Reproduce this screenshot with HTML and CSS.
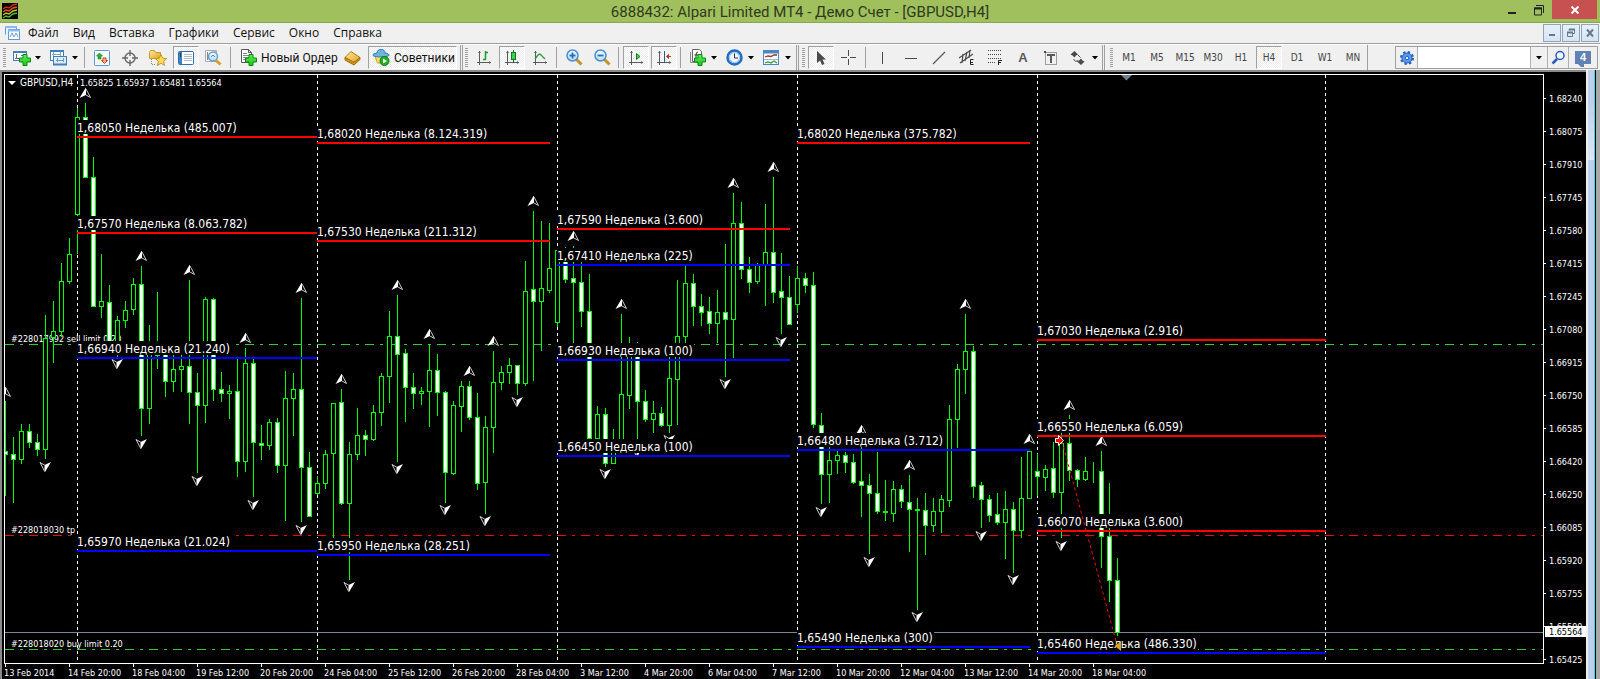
FILE: index.html
```html
<!DOCTYPE html>
<html lang="ru">
<head>
<meta charset="utf-8">
<title>6888432: Alpari Limited MT4 - Демо Счет - [GBPUSD,H4]</title>
<link rel="stylesheet" href="styles.css">
</head>
<body>
<svg class="defs" width="0" height="0" aria-hidden="true">
  <defs>
    <linearGradient id="plusFill" x1="0" y1="0" x2="0" y2="1"><stop offset="0" stop-color="#5bf05b"/><stop offset="1" stop-color="#1ac51a"/></linearGradient>
    <linearGradient id="goldFill" x1="0" y1="0" x2="1" y2="1"><stop offset="0" stop-color="#ffe9a0"/><stop offset="1" stop-color="#e0a520"/></linearGradient>
    <linearGradient id="lensFill" x1="0" y1="0" x2="0" y2="1"><stop offset="0" stop-color="#f2faff"/><stop offset="1" stop-color="#b9dcf5"/></linearGradient>
    <symbol id="plus" viewBox="0 0 12 12"><path d="M4 .5h4V4h3.500v4H8v3.500H4V8H.5V4H4z" fill="url(#plusFill)" stroke="#0a8a0a"/></symbol>
    <symbol id="axes" viewBox="0 0 16 16"><path d="M3.500 1v14M1 12.500h14" fill="none" stroke="#5a5a5a"/><path d="M2 3h3L3.500 1zM13 11v3l2-1.500z" fill="#5a5a5a"/></symbol>
    <symbol id="caret" viewBox="0 0 6 4"><path d="M0 0h6L3 3.500z" fill="#000"/></symbol>
  </defs>
</svg>

<header class="titlebar">
  <svg class="app-icon" width="16" height="16" viewBox="0 0 16 16"><rect width="16" height="16" fill="#000"/><g fill="none" stroke-width="1.500"><path d="M1 6l3-2 3 1 4-3 4-1" stroke="#d8281c"/><path d="M1 9l3-2 3 1 4-3 4-1" stroke="#e8581c"/><path d="M1 12l3-2 3 1 4-3 4-1" stroke="#b8c828"/><path d="M1 15l3-2 3 1 4-3 4-1" stroke="#58b828"/></g></svg>
  <h1 class="title">6888432: Alpari Limited MT4 - Демо Счет - [GBPUSD,H4]</h1>
  <div class="win-controls">
    <button class="win-btn" aria-label="Свернуть"><svg width="12" height="12" viewBox="0 0 12 12"><rect x="2" y="8" width="8" height="2" fill="#222"/></svg></button>
    <button class="win-btn" aria-label="Восстановить"><svg width="12" height="12" viewBox="0 0 12 12"><path d="M3 1.500h7.500V9M1.500 4h7v7h-7z" fill="none" stroke="#222"/><path d="M1 4.500h8" stroke="#222" stroke-width="2"/></svg></button>
    <button class="win-btn win-close" aria-label="Закрыть"><svg width="10" height="10" viewBox="0 0 10 10"><path d="M1.500 1.500l7 7m0-7l-7 7" stroke="#fff" stroke-width="2"/></svg></button>
  </div>
</header>

<nav class="menubar">
  <svg class="mdi-icon" width="16" height="16" viewBox="0 0 16 16"><path d="M1.500 9.500v-8h11v3" fill="#eaf4ff" stroke="#5c9bd8"/><path d="M1 2h12" stroke="#8abaf0" stroke-width="2"/><rect x="4.500" y="4.500" width="11" height="10" fill="#fff" stroke="#5c9bd8"/><path d="M4 5.500h12" stroke="#8abaf0" stroke-width="2"/><path d="M6 12l2-4 2 4 2-4 2 4" fill="none" stroke="#6aa0e0"/></svg>
  <button class="menu">Файл</button><button class="menu">Вид</button><button class="menu">Вставка</button><button class="menu">Графики</button><button class="menu">Сервис</button><button class="menu">Окно</button><button class="menu">Справка</button>
  <div class="mdi-controls">
    <button class="mdi-btn" aria-label="Свернуть окно"><svg width="10" height="10" viewBox="0 0 10 10"><rect x="2" y="6" width="6" height="2" fill="#68798a"/></svg></button>
    <button class="mdi-btn" aria-label="Восстановить окно"><svg width="10" height="10" viewBox="0 0 10 10"><path d="M3 2.500V1.500h5.500v4H7M1.500 4.500h5v4h-5z" fill="none" stroke="#68798a"/><path d="M1 4.500h6M3 1.500h6" stroke="#68798a" stroke-width="2"/></svg></button>
    <button class="mdi-btn" aria-label="Закрыть окно"><svg width="10" height="10" viewBox="0 0 10 10"><path d="M2 1.500l6 7m0-7l-6 7" stroke="#68798a" stroke-width="2"/></svg></button>
  </div>
</nav>

<div class="toolbars">
  <div class="toolbar standard" role="toolbar">
    <span class="grip"></span>
    <button class="tool drop" aria-label="Новый график"><svg width="18" height="16" viewBox="0 0 18 16"><rect x=".5" y="1.500" width="13" height="9" fill="#fff" stroke="#3f7fc0"/><path d="M0 2h14" stroke="#3f7fc0" stroke-width="2"/><path d="M3.500 4v5M2 8.500h4M8 5.500h2" stroke="#667"/><use href="#plus" x="6" y="4" width="12" height="12"/></svg><svg class="caret" width="6" height="4"><use href="#caret"/></svg></button>
    <button class="tool drop" aria-label="Профили"><svg width="18" height="16" viewBox="0 0 18 16"><rect x=".5" y=".5" width="13" height="10" fill="#fff" stroke="#3f7fc0"/><path d="M2 4.500h9M3.500 2v4M10.500 2v4" stroke="#8aa" /><rect x="3.500" y="6.500" width="13" height="8" fill="#d8ecfb" stroke="#3f7fc0"/><path d="M0 1h14M3 14.500h14" stroke="#3f7fc0" stroke-width="2"/><path d="M6 10.500h8M7.500 8v4M13.500 8v4" stroke="#79a"/></svg><svg class="caret" width="6" height="4"><use href="#caret"/></svg></button>
    <span class="sep"></span>
    <button class="tool" aria-label="Обзор рынка"><svg width="16" height="16" viewBox="0 0 16 16"><rect x=".5" y=".5" width="15" height="15" rx="1" fill="#f4faff" stroke="#5a9bd5"/><path d="M5.500 3l3 3H7v3H4V6H2.500z" fill="#2fae2f" stroke="#158015" stroke-width=".6"/><path d="M10.500 13.500l3-3H12V8H9v2.500H7.500z" fill="#ffb090" stroke="#d04010"/></svg></button>
    <button class="tool" aria-label="Окно данных"><svg width="16" height="16" viewBox="0 0 16 16"><circle cx="8" cy="8" r="5" fill="none" stroke="#666" stroke-width="1.400"/><path d="M8 0v6m0 4v6M0 8h6m4 0h6" stroke="#666" stroke-width="1.400"/></svg></button>
    <button class="tool" aria-label="Навигатор"><svg width="18" height="16" viewBox="0 0 18 16"><path d="M.5 2.500l1-2h4l1 2h5v6H.5z" fill="url(#goldFill)" stroke="#c89a28"/><path d="M2.500 9v5.500H6" fill="none" stroke="#888" stroke-dasharray="1 1"/><path d="M12 4.500l1.700 3.700 4 .4-3 2.700.9 4.200-3.600-2.200-3.600 2.200.9-4.200-3-2.700 4-.4z" fill="#ffd95a" stroke="#b8860b" stroke-width=".8"/></svg></button>
    <button class="tool pressed" aria-label="Терминал"><svg width="16" height="14" viewBox="0 0 16 14"><rect x=".5" y=".5" width="15" height="13" rx="1" fill="#fff" stroke="#2e6db0"/><rect x="1" y="1" width="3" height="12" fill="#3f7fc0"/><path d="M2 3h1M2 5h1" stroke="#111"/><path d="M6 3.500h8M6 5.500h8M6 7.500h8M6 9.500h8" stroke="#a8bcd0"/></svg></button>
    <button class="tool" aria-label="Тестер стратегий"><svg width="18" height="17" viewBox="0 0 18 17"><path d="M.5 1.500h11v11H.5z" fill="#f7f7f7" stroke="#aab"/><path d="M2.500 3v8M10 2v5" stroke="#888"/><path d="M10.500 11l5 4.500" stroke="#d8a020" stroke-width="3"/><circle cx="8" cy="7.500" r="4.500" fill="url(#lensFill)" stroke="#6aa0cc" stroke-width="1.500"/><path d="M6 8l2-2 2 2" fill="none" stroke="#58a"/></svg></button>
    <span class="sep"></span>
    <button class="tool labeled new-order"><svg width="17" height="17" viewBox="0 0 17 17"><path d="M1.500.5h7l3 3v10h-10z" fill="#fff" stroke="#555"/><path d="M8.500.5v3h3" fill="none" stroke="#555"/><path d="M3 4.500h4M3 6.500h6M3 8.500h6M3 10.500h3" stroke="#888"/><use href="#plus" x="5" y="5" width="12" height="12"/></svg><span>Новый Ордер</span></button>
    <button class="tool" aria-label="MetaEditor"><svg width="18" height="16" viewBox="0 0 18 16"><path d="M7 1.500l9 6-6 5-9-5z" fill="url(#goldFill)" stroke="#b07a10"/><path d="M1 7.500v2.500l9 5 6-5.500V7.500l-6 5z" fill="#d89820" stroke="#a06a08"/></svg></button>
    <button class="tool labeled pressed advisors"><svg width="18" height="17" viewBox="0 0 18 17"><path d="M3 7h12l-1.500 7h-8z" fill="#ffe070" stroke="#c8a020"/><path d="M5 4c0-5 8-5 8 0 3 .5 4.500 1.500 4 2.500-2 2-14 2-16 0C.5 5.500 2 4.500 5 4z" fill="#6ab4e0" stroke="#2e7fb0"/><circle cx="12.500" cy="12" r="4.500" fill="#22b022" stroke="#108010"/><path d="M11 9.500l4 2.500-4 2.500z" fill="#fff"/></svg><span>Советники</span></button>
  </div>

  <div class="toolbar charts" role="toolbar">
    <span class="grip"></span>
    <button class="tool" aria-label="Бары"><svg width="16" height="16" viewBox="0 0 16 16"><use href="#axes"/><path d="M9.500 1v9M9.500 2.500H12M7 9.500h2.500" stroke="#1a9a2a" stroke-width="1.500" fill="none"/></svg></button>
    <button class="tool pressed" aria-label="Свечи"><svg width="16" height="16" viewBox="0 0 16 16"><use href="#axes"/><path d="M9.500 0v12" stroke="#107a20"/><rect x="7.500" y="2.500" width="4" height="7" fill="#3fd050" stroke="#107a20"/></svg></button>
    <button class="tool" aria-label="Линия"><svg width="16" height="16" viewBox="0 0 16 16"><use href="#axes"/><path d="M3 9l3-4q2-2 4 1l3 3" fill="none" stroke="#2a9a3a" stroke-width="1.300"/></svg></button>
    <span class="sep"></span>
    <button class="tool" aria-label="Увеличить"><svg width="17" height="17" viewBox="0 0 17 17"><path d="M10.500 10.500l5 5" stroke="#c89020" stroke-width="3"/><circle cx="6.500" cy="6.500" r="5.500" fill="url(#lensFill)" stroke="#4a90d0" stroke-width="1.500"/><path d="M3.500 6.500h6M6.500 3.500v6" stroke="#2a70b8" stroke-width="1.800"/></svg></button>
    <button class="tool" aria-label="Уменьшить"><svg width="17" height="17" viewBox="0 0 17 17"><path d="M10.500 10.500l5 5" stroke="#c89020" stroke-width="3"/><circle cx="6.500" cy="6.500" r="5.500" fill="url(#lensFill)" stroke="#4a90d0" stroke-width="1.500"/><path d="M3.500 6.500h6" stroke="#2a70b8" stroke-width="1.800"/></svg></button>
    <span class="sep"></span>
    <button class="tool pressed" aria-label="Автопрокрутка"><svg width="16" height="16" viewBox="0 0 16 16"><use href="#axes"/><path d="M8.500 3.500l3.500 3-3.500 3z" fill="#3fd050" stroke="#107a20"/></svg></button>
    <button class="tool pressed" aria-label="Сдвиг графика"><svg width="16" height="16" viewBox="0 0 16 16"><use href="#axes"/><path d="M8.500 1v11" stroke="#2a5a90"/><path d="M15 6.500h-4" stroke="#c03a10"/><path d="M12.500 4.500l-2 2 2 2z" fill="#d04010" stroke="#c03a10"/></svg></button>
    <span class="sep"></span>
    <button class="tool drop" aria-label="Индикаторы"><svg width="18" height="17" viewBox="0 0 18 17"><path d="M3.500.5h7l2 2v10h-9z" fill="#fff" stroke="#666"/><path d="M1.500 3v10.500H10" fill="none" stroke="#888"/><path d="M9 3Q7 3 7 6v4M5.500 6h3.500" fill="none" stroke="#333"/><use href="#plus" x="5" y="5" width="12" height="12"/></svg><svg class="caret" width="6" height="4"><use href="#caret"/></svg></button>
    <button class="tool drop" aria-label="Периоды"><svg width="18" height="17" viewBox="0 0 18 17"><circle cx="8.500" cy="8.500" r="7" fill="#fff" stroke="#1f6cc0" stroke-width="2.500"/><circle cx="8.500" cy="8.500" r="5" fill="#eef6ff" stroke="#8abaf0"/><path d="M8.500 4.500v4.500H12" fill="none" stroke="#333"/></svg><svg class="caret" width="6" height="4"><use href="#caret"/></svg></button>
    <button class="tool drop" aria-label="Шаблоны"><svg width="18" height="16" viewBox="0 0 18 16"><rect x=".5" y=".5" width="15" height="14" fill="#fff" stroke="#4a88c8"/><path d="M0 2h16" stroke="#4a88c8" stroke-width="3"/><path d="M1 9.500h14" stroke="#9abbe0"/><path d="M2 7l3-1 3 .5L11 5h3" fill="none" stroke="#a03020" stroke-width="1.300"/><path d="M2 13l3-1 3 1 3-2 3 2" fill="none" stroke="#2a9a3a" stroke-width="1.300"/></svg><svg class="caret" width="6" height="4"><use href="#caret"/></svg></button>
  </div>

  <div class="toolbar drawing" role="toolbar">
    <span class="grip"></span>
    <button class="tool pressed" aria-label="Курсор"><svg width="16" height="16" viewBox="0 0 16 16"><path d="M4 1v12l3-2.500 2 4.500 2.500-1-2-4.500h3.500z" fill="#4a4a4a"/></svg></button>
    <button class="tool" aria-label="Перекрестие"><svg width="16" height="16" viewBox="0 0 16 16"><path d="M7.500 0v6m0 3v6M0 7.500h6m3 0h6" stroke="#4a4a4a"/></svg></button>
    <span class="sep"></span>
    <button class="tool" aria-label="Вертикальная линия"><svg width="16" height="16" viewBox="0 0 16 16"><path d="M7.500 2v12" stroke="#4a4a4a"/></svg></button>
    <button class="tool" aria-label="Горизонтальная линия"><svg width="16" height="16" viewBox="0 0 16 16"><path d="M2 8.500h12" stroke="#4a4a4a"/></svg></button>
    <button class="tool" aria-label="Трендовая линия"><svg width="16" height="16" viewBox="0 0 16 16"><path d="M2 14L14 2" stroke="#5a5a5a" stroke-width="1.200"/></svg></button>
    <button class="tool" aria-label="Равноудаленный канал"><svg width="16" height="17" viewBox="0 0 16 17"><path d="M0 9l12-8M1 14L14 5M3 14l1-9M6 12l2-9M10 9l1-8" stroke="#4a4a4a" stroke-width="1.200"/><path d="M14.500 10.500h-3v5h3M11 13.500h3" fill="none" stroke="#222"/></svg></button>
    <button class="tool" aria-label="Линии Фибоначчи"><svg width="16" height="17" viewBox="0 0 16 17"><path d="M1 1.500h14M1 5.500h14M1 9.500h14M1 13.500h8" stroke="#4a4a4a" stroke-dasharray="1 1"/><path d="M11.500 16v-4.500H15M11.500 13.500H14" fill="none" stroke="#222"/></svg></button>
    <button class="tool letter">A</button>
    <button class="tool" aria-label="Текстовая метка"><svg width="16" height="16" viewBox="0 0 16 16"><rect x="2.500" y="2.500" width="11" height="12" fill="none" stroke="#4a4a4a" stroke-dasharray="1 1"/><path d="M5 6V5h6v1M8 5v8" fill="none" stroke="#5a5a5a" stroke-width="2"/><rect x="1" y="1" width="2" height="2" fill="#4a4a4a"/></svg></button>
    <button class="tool drop" aria-label="Стрелки"><svg width="18" height="16" viewBox="0 0 18 16"><path d="M4.500 1l3.500 3.500-2 1-1.500 2-2-2-2-1zM11 15l3.500-3.500-2-1-1.500-2-2 2-2 1z" fill="#4a4a4a"/><path d="M3.500 9l2 2.500 2.500-1M8 5l2.500 2.500" fill="none" stroke="#4a4a4a"/></svg><svg class="caret" width="6" height="4"><use href="#caret"/></svg></button>
  </div>

  <div class="toolbar periods" role="toolbar">
    <span class="grip"></span>
    <button class="tool">M1</button><button class="tool">M5</button><button class="tool">M15</button><button class="tool">M30</button><button class="tool">H1</button><button class="tool pressed">H4</button><button class="tool">D1</button><button class="tool">W1</button><button class="tool">MN</button>
  </div>

  <form class="search">
    <button type="button" class="search-btn" aria-label="Настройки"><svg width="16" height="16" viewBox="0 0 16 16"><circle cx="8" cy="8" r="6" fill="none" stroke="#1f5fc0" stroke-width="2" stroke-dasharray="2.400 2.312"/><circle cx="8" cy="8" r="5" fill="#5a9aec" stroke="#1f5fc0"/><circle cx="8" cy="8" r="1.800" fill="#dbe9fb" stroke="#1f5fc0"/></svg></button>
    <input class="search-input" type="text" aria-label="Поиск">
    <button type="button" class="search-btn search-caret" aria-label="История поиска"><svg width="6" height="4"><use href="#caret"/></svg></button>
    <button type="button" class="search-btn" aria-label="Найти"><svg width="15" height="15" viewBox="0 0 15 15"><path d="M6 9l-4.500 4.500" stroke="#2a5ac0" stroke-width="2.500"/><circle cx="9" cy="5.500" r="4" fill="#f4f8ff" stroke="#2a5ac0" stroke-width="1.500"/></svg></button>
    <button type="button" class="search-btn search-chat"><span class="bubble">4</span></button>
  </form>
</div>

<main class="workspace">
  <section class="chart" aria-label="GBPUSD,H4">
    <div class="plot"><svg id="plot" class="plot-canvas"></svg></div>
    <ul class="price-axis">
      <li>1.68240</li><li>1.68075</li><li>1.67910</li><li>1.67745</li><li>1.67580</li><li>1.67415</li><li>1.67245</li><li>1.67080</li><li>1.66915</li><li>1.66750</li><li>1.66585</li><li>1.66420</li><li>1.66250</li><li>1.66085</li><li>1.65920</li><li>1.65755</li><li>1.65590</li><li>1.65425</li>
      <li class="price-now">1.65564</li>
    </ul>
    <ul class="time-axis">
      <li>13 Feb 2014</li><li>14 Feb 20:00</li><li>18 Feb 04:00</li><li>19 Feb 12:00</li><li>20 Feb 20:00</li><li>24 Feb 04:00</li><li>25 Feb 12:00</li><li>26 Feb 20:00</li><li>28 Feb 04:00</li><li>3 Mar 12:00</li><li>4 Mar 20:00</li><li>6 Mar 04:00</li><li>7 Mar 12:00</li><li>10 Mar 20:00</li><li>12 Mar 04:00</li><li>13 Mar 12:00</li><li>14 Mar 20:00</li><li>18 Mar 04:00</li>
    </ul>
  </section>
  <div class="frame-edge"><div class="frame-glow"></div></div>
</main>
<script src="chart.js"></script>
</body>
</html>
```

FILE: styles.css
```css
* { box-sizing: border-box; }

body {
  margin: 0;
  min-height: 100vh;
  display: flex;
  flex-direction: column;
  overflow: hidden;
  background: #f0f0f0;
  color: #111;
  font: 12px/16px "Open Sans", "Noto Sans", sans-serif;
}

button {
  border: 0;
  margin: 0;
  padding: 0;
  background: none;
  font: inherit;
  color: inherit;
}

svg { display: block; flex: none; }
.defs { position: absolute; }
ul { list-style: none; margin: 0; padding: 0; }

/* Title bar */
.titlebar {
  display: grid;
  grid-template-columns: 1fr auto 1fr;
  height: 23px;
  background: #9fc05d;
  border-bottom: 1px solid #86a84c;
}
.app-icon { margin: 3px 0 0 2px; }
.title {
  margin: 0;
  font: 400 15px/24px Roboto, "Open Sans", sans-serif;
  color: #2f3a1c;
}
.win-controls {
  display: flex;
  justify-content: flex-end;
  align-items: flex-start;
  padding-right: 3px;
}
.win-btn {
  width: 27px;
  height: 19px;
  display: flex;
  align-items: center;
  justify-content: center;
}
.win-close { width: 45px; background: #c75050; }

/* Menu */
.menubar {
  display: flex;
  height: 21px;
  border-bottom: 1px solid #a0a0a0;
}
.mdi-icon { margin: 2px 0 0 4px; }
.menu { padding: 0 6px 0 8px; height: 19px; }
.mdi-controls { display: flex; gap: 1px; margin-left: auto; padding: 1px 1px 0 0; }
.mdi-btn {
  width: 18px;
  height: 18px;
  display: flex;
  align-items: center;
  justify-content: center;
  border: 1px solid #93a5b5;
  background: linear-gradient(#e6f1fa, #d3e5f5);
}

/* Toolbars */
.toolbars {
  display: flex;
  height: 26px;
  border-top: 1px solid #fff;
}
.toolbar {
  display: flex;
  align-items: center;
  border-right: 3px double #a0a0a0;
}
.standard { padding: 0 2px 0 1px; }
.charts { padding-right: 1px; }
.drawing { padding-left: 1px; }
.periods {
  border-right: 1px solid #a0a0a0;
  padding-left: 3px;
  color: #444;
  font: 10px/12px "DejaVu Sans Condensed", sans-serif;
}
.grip {
  width: 3px;
  height: 19px;
  margin: 0 2px;
  background: repeating-linear-gradient(#a0a0a0 0 1px, transparent 1px 2px);
}
.sep { width: 1px; height: 21px; margin: 0 3px 0 2px; background: #a0a0a0; }
.tool {
  width: 26px;
  height: 23px;
  margin: 0 1px;
  display: flex;
  align-items: center;
  justify-content: center;
}
.drop { width: 35px; justify-content: flex-start; padding-left: 4px; gap: 4px; }
.labeled {
  justify-content: flex-start;
  gap: 4px;
  white-space: nowrap;
  font: 12px/16px Roboto, "Open Sans", sans-serif;
}
.new-order { width: 103px; padding-left: 5px; }
.advisors { width: 89px; padding-left: 3px; }
.pressed {
  background: repeating-conic-gradient(#fff 0 25%, #ececec 0 50%) 0 0 / 2px 2px;
  border: 1px solid;
  border-color: #a0a0a0 #fff #fff #a0a0a0;
}
.letter { font: 700 13px/16px "Liberation Sans", sans-serif; color: #5a5a5a; }

.search {
  display: flex;
  margin: 1px 2px 0 auto;
  width: 203px;
  height: 23px;
  border: 1px solid #a0a0a0;
}
.search-btn {
  width: 21px;
  display: flex;
  align-items: center;
  justify-content: center;
}
.search-input {
  flex: 1;
  min-width: 0;
  border: 0;
  border-left: 1px solid #b0b0b0;
  border-right: 1px solid #b0b0b0;
  padding: 0 4px;
  background: #fff;
}
.search-caret { width: 16px; }
.search-caret + .search-btn { width: 22px; border-left: 1px solid #b0b0b0; border-right: 1px solid #b0b0b0; }
.search-chat { width: 28px; }
.bubble {
  position: relative;
  width: 16px;
  height: 13px;
  background: #6180b3;
  color: #fff;
  font: 700 11px/13px "Liberation Sans", sans-serif;
}
.bubble::after {
  content: "";
  position: absolute;
  left: 3px;
  top: 13px;
  border: 3px solid transparent;
  border-top-color: #6180b3;
  border-right-color: #6180b3;
  border-bottom-width: 0;
}

/* Chart window */
.workspace { flex: 1; display: flex; min-height: 0; }
.chart {
  flex: 1;
  min-width: 0;
  display: grid;
  grid-template: minmax(0, 1fr) 15px / minmax(0, 1fr) 42px;
  padding: 2px 0 0 2px;
  background: #000;
  border-top: 2px solid #8a8a8a;
  border-left: 2px solid #8a8a8a;
  color: #fff;
  font: 9px/12px "DejaVu Sans Condensed", sans-serif;
}
.plot { border: 1px solid #fff; min-height: 0; }
.plot-canvas { width: 100%; height: 100%; overflow: hidden; }
.price-axis { position: relative; grid-row: 1 / 3; grid-column: 2; padding-top: 8px; overflow: hidden; }
.price-axis li {
  display: flex;
  align-items: center;
  gap: 3px;
  height: 33px;
}
.price-axis li::before { content: ""; width: 2px; height: 1px; background: #fff; }
.price-axis .price-now {
  position: absolute;
  left: 1px;
  right: 0;
  top: 552px;
  height: 11px;
  padding-left: 4px;
  background: #fff;
  color: #000;
}
.price-axis .price-now::before { display: none; }
.time-axis { display: flex; overflow: hidden; white-space: nowrap; }
.time-axis li { flex: none; width: 64px; line-height: 12px; }
.time-axis li::before { content: ""; display: block; width: 1px; height: 3px; margin-left: 1px; background: #fff; }

.frame-edge {
  width: 14px;
  display: flex;
  background: #a9a9a9;
  border-left: 2px solid #f0f0f0;
}
.frame-glow {
  width: 8px;
  border-right: 1px solid #000;
  background: linear-gradient(90deg, transparent 6px, #3fd0f0 6px),
    linear-gradient(#b9d1ea 0 30px, #dbe8f5 90px, #b9d1ea 90px);
}

/* Chart drawing */
.candle { stroke: #0f0; stroke-width: 1; }
.bull { fill: #000; }
.bear { fill: #fff; }
.period { stroke: #fff; stroke-dasharray: 3 3; }
.order { stroke-dasharray: 9 6 3 6; }
.order.limit { stroke: #32cd32; }
.order.profit { stroke: #f00; }
.price { stroke: #778899; }
.small-text { fill: #fff; font: 9px "DejaVu Sans Condensed", sans-serif; }
.symbol-text { fill: #fff; font: 10px "DejaVu Sans Condensed", sans-serif; }
.level-text { fill: #fff; font: 12px "DejaVu Sans Condensed", sans-serif; }
.level-back { fill: #000; }
.level.red { fill: #f00; }
.level.blue { fill: #00f; }
.fractal-solid { fill: #fff; }
.fractal-open { fill: none; stroke: #ccc; }
.trade { stroke: #f00; stroke-dasharray: 3 3; }
```

FILE: chart.js
```js
const NS = "http://www.w3.org/2000/svg";
const svg = document.getElementById("plot");

function add(parent, tag, attrs, text) {
  const el = document.createElementNS(NS, tag);
  for (const key in attrs) el.setAttribute(key, attrs[key]);
  if (text) el.textContent = text;
  parent.appendChild(el);
  return el;
}

// Bars are 8px apart; each is [high, low, body top, body bottom, 1 if bearish]
const bars = [
  [401,496,451,455,1],[437,503,454,460,1],[424,464,431,460,0],[424,448,431,443,1],[434,456,442,450,1],
  [315,459,338,450,0],[301,363,331,338,0],[263,337,281,332,0],[238,284,254,282,0],[108,254,117,215,0],
  [103,178,117,178,1],[157,307,177,307,1],[254,318,301,307,0],[285,350,302,350,1],[316,357,320,345,0],
  [301,328,310,321,0],[278,315,284,310,0],[266,436,284,409,1],[325,424,345,409,0],[292,369,350,356,0],
  [352,397,352,382,1],[350,392,369,382,0],[350,392,366,370,0],[280,424,366,393,1],[373,473,392,406,1],
  [297,423,299,406,0],[298,401,299,390,1],[372,402,389,394,1],[385,419,391,394,0],[357,477,391,462,1],
  [348,472,363,462,0],[359,497,363,443,1],[425,460,443,446,1],[419,450,422,446,0],[418,473,422,466,1],
  [371,521,398,466,0],[373,436,389,399,0],[298,522,389,468,1],[452,517,467,517,1],[476,495,483,494,0],
  [450,489,454,484,0],[403,538,403,454,0],[389,505,402,504,1],[442,580,454,504,0],[408,460,435,455,0],
  [430,456,435,440,1],[405,441,412,440,0],[373,426,376,413,0],[311,403,336,377,0],[295,462,336,355,1],
  [349,422,353,388,1],[373,409,387,394,1],[387,405,391,394,0],[344,427,370,392,0],[354,416,370,393,1],
  [391,503,392,473,1],[401,475,405,474,0],[381,432,386,407,0],[381,420,386,418,1],[393,490,417,484,1],
  [416,514,427,483,0],[351,453,382,428,0],[366,390,372,383,0],[358,384,365,373,0],[365,395,365,384,1],
  [261,386,291,384,0],[211,381,289,302,1],[221,351,288,302,0],[223,293,268,291,0],[250,327,250,323,0],
  [247,283,256,280,1],[246,343,278,283,1],[255,327,282,312,1],[274,439,311,439,1],[406,439,414,439,0],
  [408,467,414,464,1],[429,464,445,464,0],[314,445,394,445,0],[337,409,350,396,0],[342,445,350,402,1],
  [390,422,401,420,1],[401,433,413,420,0],[407,427,413,426,1],[350,433,378,426,0],[280,425,336,380,0],
  [265,343,283,337,0],[274,326,283,307,1],[294,326,306,313,1],[297,334,311,324,1],[290,343,312,324,0],
  [244,377,312,320,1],[193,358,223,320,0],[202,279,223,270,1],[257,293,269,283,1],[263,284,265,282,0],
  [204,306,252,265,0],[177,303,252,293,1],[253,334,291,298,1],[276,325,297,325,1],[266,313,278,305,0],
  [273,293,278,286,1],[272,428,285,425,1],[413,504,425,475,1],[447,503,460,475,0],[451,474,455,461,0],
  [452,473,455,463,1],[454,484,462,483,1],[447,517,481,486,1],[474,554,485,494,1],[452,514,493,512,1],
  [480,521,511,513,0],[481,522,489,514,0],[485,508,489,502,1],[475,552,502,510,1],[498,610,509,511,0],
  [493,555,510,526,1],[498,532,511,526,0],[495,533,499,512,0],[405,507,419,501,0],[364,448,369,420,0],
  [314,394,351,370,0],[346,498,351,487,1],[482,528,485,500,1],[495,522,499,516,1],[493,525,514,523,1],
  [491,559,509,523,0],[502,573,509,531,1],[457,538,498,531,0],[451,499,451,499,0],[454,496,471,477,1],
  [465,491,469,478,0],[442,498,468,493,1],[433,538,443,493,0],[415,481,443,471,1],[469,487,470,480,1],
  [457,481,471,480,0],[462,483,472,473,0],[451,568,471,537,1],[483,602,536,581,1],[558,636,580,633,1]
];

// Fractal marks: [bar index, y of the mark's top edge]
const fractalsUp = [[0,387],[10,88],[17,251],[23,265],[30,333],[37,283],[42,374],[49,280],[53,329],[58,366],
  [61,336],[66,196],[71,231],[77,299],[91,178],[96,162],[107,425],[113,460],[120,299],[128,434],[133,400],[137,436]];
const fractalsDown = [[5,462],[14,359],[17,439],[24,476],[31,500],[37,525],[43,582],[49,464],[55,505],[60,516],
  [64,397],[75,469],[79,447],[83,435],[90,379],[97,337],[102,507],[108,557],[114,612],[122,531],[126,575],[132,541]];

const periods = [77, 317, 557, 797, 1037, 1325];

// Weekly levels: [x, end x, y, colour, text]
const levels = [
  [77,317,136,"red","1,68050 Неделька (485.007)"],
  [77,317,232,"red","1,67570 Неделька (8.063.782)"],
  [77,317,357,"blue","1,66940 Неделька (21.240)"],
  [77,317,550,"blue","1,65970 Неделька (21.024)"],
  [317,550,142,"red","1,68020 Неделька (8.124.319)"],
  [317,550,240,"red","1,67530 Неделька (211.312)"],
  [317,550,554,"blue","1,65950 Неделька (28.251)"],
  [557,790,228,"red","1,67590 Неделька (3.600)"],
  [557,790,264,"blue","1,67410 Неделька (225)"],
  [557,790,359,"blue","1,66930 Неделька (100)"],
  [557,790,455,"blue","1,66450 Неделька (100)"],
  [797,1030,142,"red","1,68020 Неделька (375.782)"],
  [797,1030,449,"blue","1,66480 Неделька (3.712)"],
  [797,1030,646,"blue","1,65490 Неделька (300)"],
  [1037,1326,339,"red","1,67030 Неделька (2.916)"],
  [1037,1326,435,"red","1,66550 Неделька (6.059)"],
  [1037,1326,530,"red","1,66070 Неделька (3.600)"],
  [1037,1326,652,"blue","1,65460 Неделька (486.330)"]
];

const orders = [
  [344, "limit", "#228017992 sell limit 0.20"],
  [535, "profit", "#228018030 tp"],
  [649, "limit", "#228018020 buy limit 0.20"]
];

const barX = i => 5 + 8 * i;
const g = add(svg, "g", { transform: "translate(-5 -75)" });

for (const x of periods) add(g, "line", { class: "period", x1: x + 0.5, x2: x + 0.5, y1: 75, y2: "120%" });
add(g, "line", { class: "price", x1: 5, x2: "101%", y1: 632.5, y2: 632.5 });
for (const [y, kind, text] of orders) {
  add(g, "line", { class: "order " + kind, x1: 5, x2: "101%", y1: y + 0.5, y2: y + 0.5 });
  add(g, "text", { class: "small-text", x: 11, y: y - 2 }, text);
}

bars.forEach(([high, low, top, bottom, bear], i) => {
  const x = barX(i);
  add(g, "path", { class: "candle", d: `M${x + 0.5} ${high}V${low}` });
  add(g, "rect", { class: "candle " + (bear ? "bear" : "bull"), x: x - 1.5, y: top + 0.5, width: 4, height: Math.max(bottom - top - 1, 0) });
});

for (const [i, y] of fractalsUp) {
  const m = add(g, "g", { transform: `translate(${barX(i) + 0.5} ${y})` });
  add(m, "path", { class: "fractal-solid", d: "M0 0L-6 10L.5 7V0z" });
  add(m, "path", { class: "fractal-open", d: "M.5 1L5 9.500L.5 7" });
}
for (const [i, y] of fractalsDown) {
  const m = add(g, "g", { transform: `translate(${barX(i)} ${y})` });
  add(m, "path", { class: "fractal-solid", d: "M0 10L6 0L-.5 3V10z" });
  add(m, "path", { class: "fractal-open", d: "M-.5 9L-5 .5L-.5 3" });
}

for (const [x, end, y, colour, text] of levels) {
  const back = add(g, "rect", { class: "level-back", x, y: y - 16, height: 14 });
  const label = add(g, "text", { class: "level-text", x, y: y - 4 }, text);
  back.setAttribute("width", Math.ceil(label.getComputedTextLength()) + 1);
  add(g, "rect", { class: "level " + colour, x, y, width: end - x, height: 2 });
}

// Closed trade: entry arrow, path and exit arrow
add(g, "line", { class: "trade", x1: 1062, y1: 441, x2: 1117, y2: 645 });
add(g, "path", { d: "M1055.5 438.500h3v-3l5 5-5 5v-3h-3z", fill: "#f00", stroke: "#fff" });
add(g, "path", { d: "M1121 641v10l-6-5z", fill: "#daa520" });

add(g, "path", { d: "M1121 75h11l-5.500 5.500z", fill: "#708090" });
add(g, "path", { d: "M8 81h8l-4 4z", fill: "#fff" });
add(g, "text", { class: "symbol-text", x: 20, y: 86 }, "GBPUSD,H4");
add(g, "text", { class: "small-text", x: 80, y: 86 }, "1.65825 1.65937 1.65481 1.65564");
```
